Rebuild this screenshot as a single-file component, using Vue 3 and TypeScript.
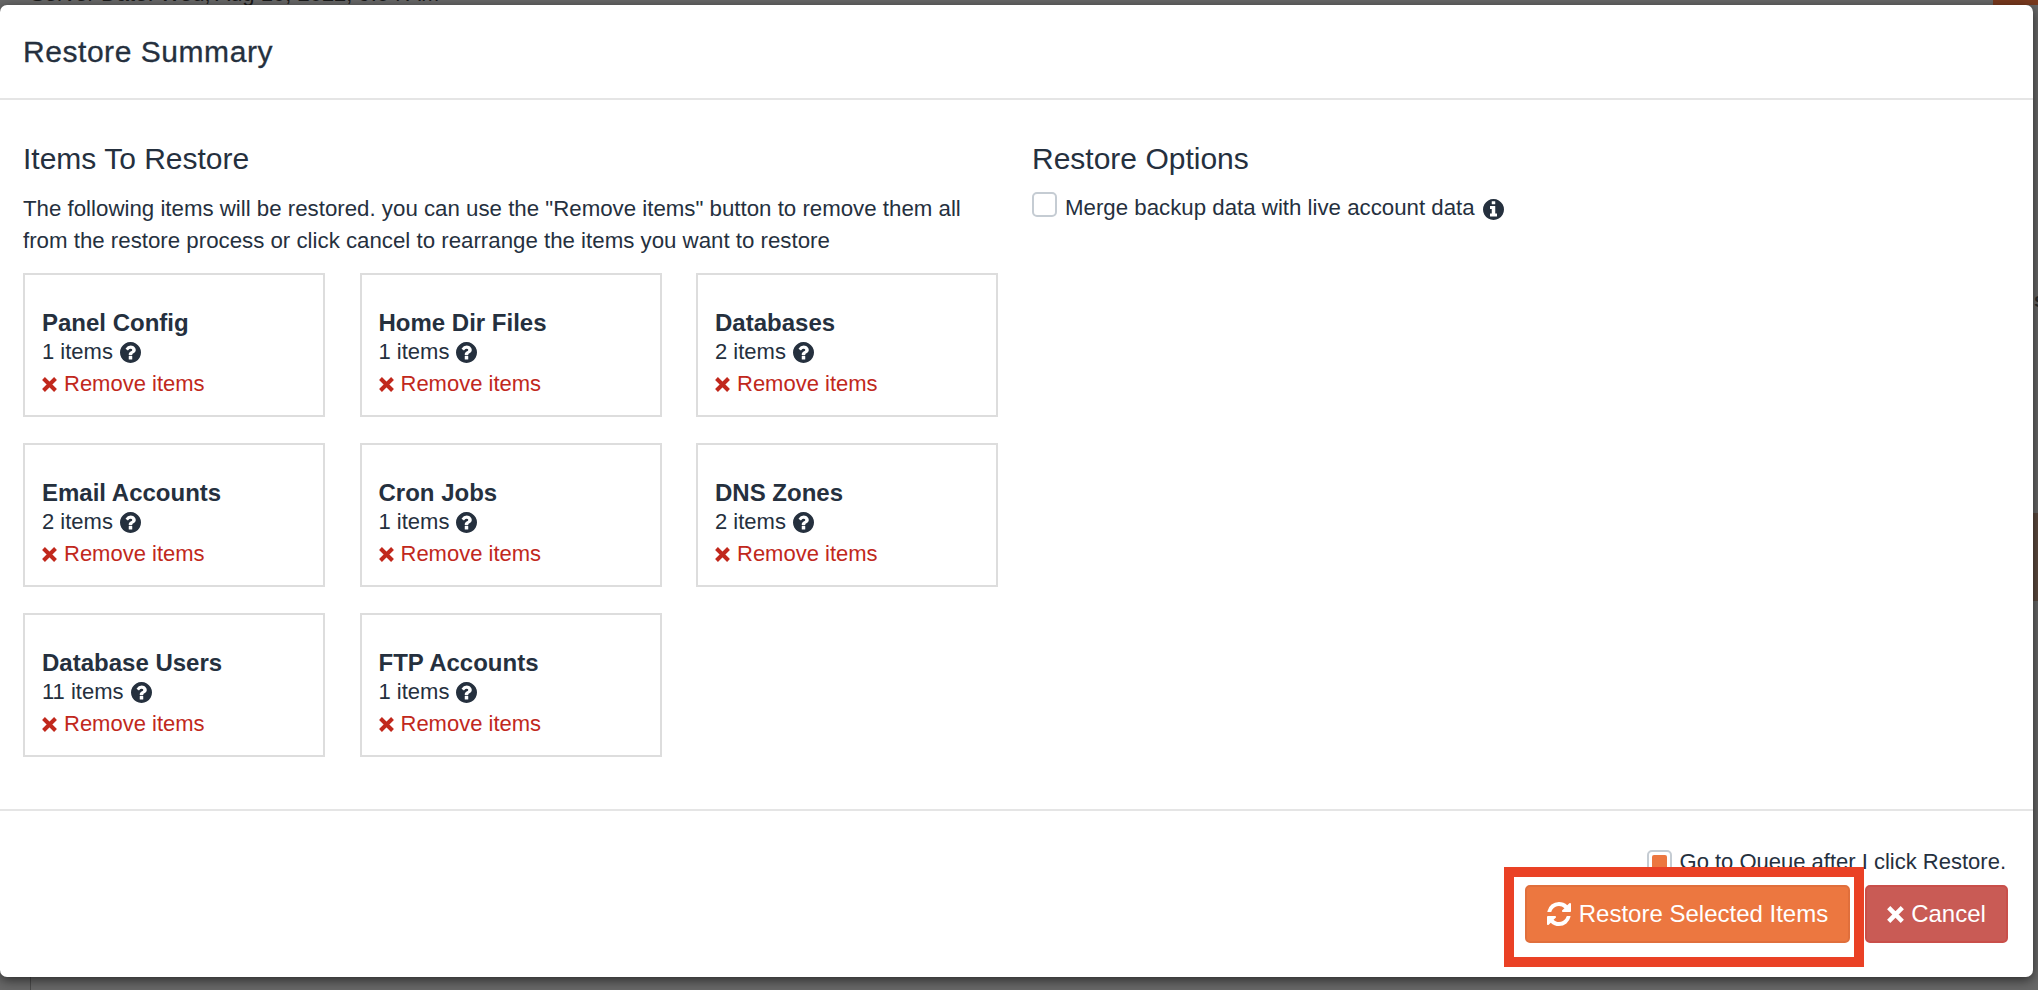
<script setup lang="ts">
const icons = {
  question: 'M1024 1376v-192q0-14-9-23t-23-9h-192q-14 0-23 9t-9 23v192q0 14 9 23t23 9h192q14 0 23-9t9-23zm256-672q0-88-55.5-163t-138.5-116-170-41q-243 0-371 213-15 24 8 42l132 100q7 6 19 6 16 0 25-12 53-68 86-92 34-24 86-24 48 0 85.5 26t37.5 59q0 38-20 61t-68 45q-63 28-115.5 86.5t-52.5 125.5v36q0 14 9 23t23 9h192q14 0 23-9t9-23q0-19 21.5-49.5t54.5-49.5q32-18 49-28.5t46-35 44.5-48 28-60.5 12.5-81zm384 192q0 209-103 385.5t-279.5 279.5-385.5 103-385.5-103-279.5-279.5-103-385.5 103-385.5 279.5-279.5 385.5-103 385.5 103 279.5 279.5 103 385.5z',
  info: 'M1152 1376v-160q0-14-9-23t-23-9h-96v-512q0-14-9-23t-23-9h-320q-14 0-23 9t-9 23v160q0 14 9 23t23 9h96v320h-96q-14 0-23 9t-9 23v160q0 14 9 23t23 9h448q14 0 23-9t9-23zm-128-896v-160q0-14-9-23t-23-9h-192q-14 0-23 9t-9 23v160q0 14 9 23t23 9h192q14 0 23-9t9-23zm640 416q0 209-103 385.5t-279.5 279.5-385.5 103-385.5-103-279.5-279.5-103-385.5 103-385.5 279.5-279.5 385.5-103 385.5 103 279.5 279.5 103 385.5z',
  refresh: 'M1639 1056q0 5-1 7-64 268-268 434.5t-478 166.5q-146 0-282.5-55t-243.5-157l-129 129q-19 19-45 19t-45-19-19-45v-448q0-26 19-45t45-19h448q26 0 45 19t19 45-19 45l-137 137q71 66 161 102t187 36q134 0 250-65t186-179q11-17 53-117 8-23 30-23h192q13 0 22.5 9.5t9.5 22.5zm25-800v448q0 26-19 45t-45 19h-448q-26 0-45-19t-19-45 19-45l138-138q-148-137-349-137-134 0-250 65t-186 179q-11 17-53 117-8 23-30 23h-199q-13 0-22.5-9.5t-9.5-22.5v-7q65-268 270-434.5t480-166.5q146 0 284 55.5t245 156.5l130-129q19-19 45-19t45 19 19 45z',
  remove: 'M1.5 1.5 13.5 13.5M13.5 1.5 1.5 13.5',
}

const items: { name: string; count: number }[] = [
  { name: 'Panel Config', count: 1 },
  { name: 'Home Dir Files', count: 1 },
  { name: 'Databases', count: 2 },
  { name: 'Email Accounts', count: 2 },
  { name: 'Cron Jobs', count: 1 },
  { name: 'DNS Zones', count: 2 },
  { name: 'Database Users', count: 11 },
  { name: 'FTP Accounts', count: 1 },
]
</script>

<template>
  <div class="page">
    <div class="behind" aria-hidden="true">
      <div class="server-date">Server Date: Wed, Aug 10, 2022, 9:54 AM</div>
      <div class="top-mid">SS</div>
      <div class="accent-top"></div>
      <div class="accent-side"></div>
      <div class="side-letter">s</div>
      <div class="rail"></div>
    </div>

    <div class="modal">
      <header class="modal-header">
        <h3 class="modal-title">Restore Summary</h3>
      </header>

      <section class="modal-body">
        <div class="col-items">
          <h4 class="section-title">Items To Restore</h4>
          <p class="intro">
            The following items will be restored. you can use the "Remove items" button to remove them all
            from the restore process or click cancel to rearrange the items you want to restore
          </p>
          <div class="cards">
            <div v-for="item in items" :key="item.name" class="card">
              <div class="card-name">{{ item.name }}</div>
              <div class="card-count">
                <span>{{ item.count }} items</span>
                <svg class="ic ic-q" viewBox="128 128 1536 1536"><path :d="icons.question" /></svg>
              </div>
              <a class="remove">
                <svg class="ic-x" viewBox="0 0 15 15"><path :d="icons.remove" /></svg>
                <span>Remove items</span>
              </a>
            </div>
          </div>
        </div>

        <div class="col-options">
          <h4 class="section-title">Restore Options</h4>
          <label class="option">
            <span class="check"></span>
            <span>Merge backup data with live account data</span>
            <svg class="ic ic-info" viewBox="128 128 1536 1536"><path :d="icons.info" /></svg>
          </label>
        </div>
      </section>

      <footer class="modal-footer">
        <label class="queue">
          <span class="check check-on"><span class="check-fill"></span></span>
          <span>Go to Queue after I click Restore.</span>
        </label>
        <div class="actions">
          <div class="highlight-wrap">
            <button class="btn btn-restore" type="button">
              <svg class="ic ic-refresh" viewBox="128 128 1536 1536"><path :d="icons.refresh" /></svg>
              <span>Restore Selected Items</span>
            </button>
            <div class="highlight"></div>
          </div>
          <button class="btn btn-cancel" type="button">
            <svg class="ic-x ic-cancel" viewBox="0 0 15 15"><path :d="icons.remove" /></svg>
            <span>Cancel</span>
          </button>
        </div>
      </footer>
    </div>
  </div>
</template>

<style scoped>
.page {
  position: relative;
  width: 2038px;
  height: 990px;
  overflow: hidden;
  background: #686868;
  font-family: "Liberation Sans", Arial, sans-serif;
  color: #25303e;
}

.behind {
  position: absolute;
  inset: 0;
}
.server-date {
  position: absolute;
  left: 30px;
  top: -18px;
  font-size: 22px;
  line-height: 24px;
  white-space: nowrap;
  color: #1b1b1b;
}
.top-mid {
  position: absolute;
  left: 1771px;
  top: -19px;
  font-size: 22px;
  line-height: 24px;
  color: #1b1b1b;
}
.accent-top {
  position: absolute;
  left: 1993px;
  top: 0;
  width: 45px;
  height: 5px;
  background: #7a3a1e;
}
.accent-side {
  position: absolute;
  left: 2033px;
  top: 513px;
  width: 5px;
  height: 88px;
  background: #5d4a40;
}
.side-letter {
  position: absolute;
  left: 2034px;
  top: 288px;
  font-size: 20px;
  font-weight: 700;
  line-height: 24px;
  color: #2b2b2b;
}
.rail {
  position: absolute;
  left: 30px;
  top: 977px;
  width: 1px;
  height: 13px;
  background: #4a4a4a;
}

.modal {
  position: relative;
  margin-top: 5px;
  width: 2033px;
  height: 972px;
  background: #fff;
  border-radius: 7px;
  box-shadow: 0 3px 12px rgba(0, 0, 0, 0.6);
  display: flex;
  flex-direction: column;
}

.modal-header {
  box-sizing: border-box;
  height: 95px;
  padding: 31px 23px 0;
  border-bottom: 2px solid #e5e5e5;
}
.modal-title {
  margin: 0;
  font-size: 30px;
  letter-spacing: 0.55px;
  line-height: 32px;
  font-weight: 400;
  -webkit-text-stroke: 0.3px #25303e;
}

.modal-body {
  display: grid;
  grid-template-columns: 1009px 1fr;
  height: 711px;
  box-sizing: border-box;
  padding: 41px 0 0 23px;
  border-bottom: 2px solid #e5e5e5;
}
.section-title {
  margin: 0;
  font-size: 30px;
  line-height: 36px;
  font-weight: 400;
}
.intro {
  margin: 16px 0 16px;
  font-size: 22.28px;
  line-height: 32px;
  width: 975px;
}

.cards {
  display: grid;
  grid-template-columns: repeat(3, 302px);
  grid-auto-rows: 144px;
  column-gap: 34.5px;
  row-gap: 26px;
}
.card {
  box-sizing: border-box;
  border: 2px solid #dddddd;
  padding: 34px 0 0 17px;
  font-size: 22px;
  line-height: 28px;
}
.card-name {
  font-size: 24px;
  font-weight: 700;
  line-height: 28px;
}
.card-count {
  display: flex;
  align-items: center;
  gap: 7px;
  height: 28px;
  margin-top: 1px;
}
.remove {
  display: flex;
  align-items: center;
  gap: 7px;
  height: 32px;
  margin-top: 2px;
  color: #c1281c;
}

.ic {
  display: block;
  flex: none;
  fill: currentColor;
}
.ic-q {
  width: 21px;
  height: 21px;
}
.ic-x {
  display: block;
  flex: none;
  width: 15px;
  height: 15px;
  fill: none;
  stroke: currentColor;
  stroke-width: 4;
}
.ic-info {
  width: 21px;
  height: 21px;
  margin-top: 7px;
}
.ic-refresh {
  width: 24px;
  height: 24px;
}
.ic-cancel {
  width: 17px;
  height: 17px;
}

.option {
  display: flex;
  align-items: flex-start;
  gap: 8px;
  margin-top: 15px;
  font-size: 22.28px;
  line-height: 32px;
}
.check {
  box-sizing: border-box;
  display: block;
  flex: none;
  width: 25px;
  height: 25px;
  background: #fff;
  border: 2px solid #c5ccd3;
  border-radius: 5px;
}
.check-on {
  padding: 3px;
}
.check-fill {
  display: block;
  height: 100%;
  background: #ec7740;
  border-radius: 2px;
}

.modal-footer {
  flex: 1;
  display: flex;
  flex-direction: column;
  align-items: flex-end;
  padding: 37px 25px 0 0;
}
.queue {
  display: flex;
  align-items: center;
  gap: 8px;
  height: 28px;
  margin-right: 2px;
  font-size: 22px;
  line-height: 28px;
}
.actions {
  display: flex;
  gap: 15px;
  margin-top: 9px;
}
.btn {
  box-sizing: border-box;
  display: flex;
  align-items: center;
  justify-content: center;
  height: 58px;
  margin: 0;
  border-radius: 5px;
  color: #fff;
  font-family: inherit;
  font-size: 24px;
  padding: 0;
}
.btn-restore {
  width: 325px;
  gap: 8px;
  background: #ec7740;
  border: 2px solid #e06f3c;
}
.btn-cancel {
  width: 143px;
  gap: 7px;
  background: #c95b55;
  border: 2px solid #c94f4a;
}

.highlight-wrap {
  position: relative;
}
.highlight {
  position: absolute;
  left: -21px;
  top: -18px;
  width: 360px;
  height: 100px;
  box-sizing: border-box;
  border: 10px solid #ea4125;
  pointer-events: none;
}
</style>
